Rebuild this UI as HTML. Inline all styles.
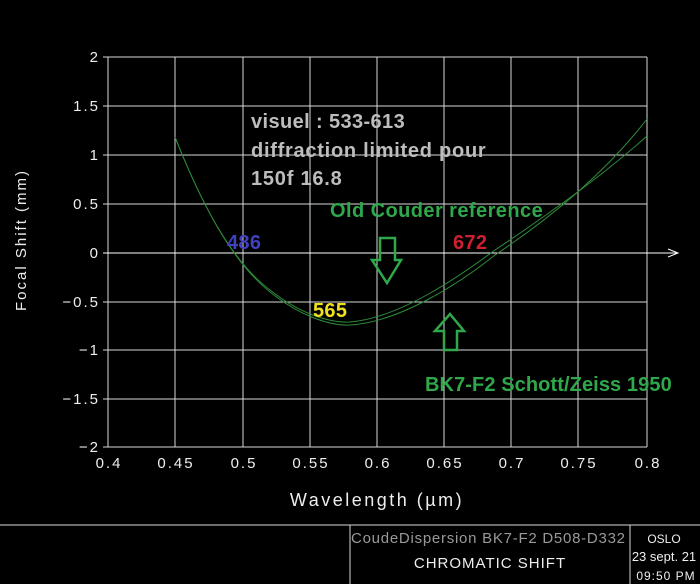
<!DOCTYPE html>
<html><head><meta charset="utf-8"><style>
html,body{margin:0;padding:0;background:#000;}
svg{display:block}
.ax{font-family:"Liberation Sans",sans-serif;font-size:15px;fill:#eee;letter-spacing:2px;}
.b{font-family:"Liberation Sans",sans-serif;font-weight:bold;font-size:20px;letter-spacing:0.3px;}
</style></head><body>
<svg width="700" height="584" viewBox="0 0 700 584" xmlns="http://www.w3.org/2000/svg">
<rect width="700" height="584" fill="#000"/>
<g stroke="#d8d8d8" stroke-width="1">
<line x1="108" y1="57" x2="108" y2="447"/><line x1="175" y1="57" x2="175" y2="447"/><line x1="243" y1="57" x2="243" y2="447"/><line x1="310" y1="57" x2="310" y2="447"/><line x1="377" y1="57" x2="377" y2="447"/><line x1="444" y1="57" x2="444" y2="447"/><line x1="511" y1="57" x2="511" y2="447"/><line x1="578" y1="57" x2="578" y2="447"/><line x1="647" y1="57" x2="647" y2="447"/>
<line x1="103" y1="57" x2="647" y2="57"/><line x1="103" y1="106" x2="647" y2="106"/><line x1="103" y1="155" x2="647" y2="155"/><line x1="103" y1="204" x2="647" y2="204"/><line x1="103" y1="302" x2="647" y2="302"/><line x1="103" y1="350" x2="647" y2="350"/><line x1="103" y1="399" x2="647" y2="399"/><line x1="103" y1="447" x2="647" y2="447"/>
<line x1="103" y1="253" x2="678" y2="253" stroke="#fff"/>
<polyline points="668,249 678,253 668,257" fill="none" stroke="#fff"/>
<line x1="0" y1="525" x2="700" y2="525"/><line x1="350" y1="525" x2="350" y2="584"/><line x1="630" y1="525" x2="630" y2="584"/>
</g>
<g class="ax" text-anchor="end">
<text x="100" y="62">2</text><text x="100" y="111">1.5</text><text x="100" y="160">1</text><text x="100" y="209">0.5</text><text x="100" y="258">0</text><text x="100" y="307">−0.5</text><text x="100" y="355">−1</text><text x="100" y="404">−1.5</text><text x="100" y="452">−2</text>
</g>
<g class="ax" text-anchor="middle">
<text x="109" y="468">0.4</text><text x="176" y="468">0.45</text><text x="244" y="468">0.5</text><text x="311" y="468">0.55</text><text x="378" y="468">0.6</text><text x="445" y="468">0.65</text><text x="512" y="468">0.7</text><text x="579" y="468">0.75</text><text x="648" y="468">0.8</text>
<text x="377" y="506" font-size="18" letter-spacing="2.5">Wavelength (µm)</text>
<text x="490" y="568" font-size="15" letter-spacing="1">CHROMATIC SHIFT</text>
<text x="664" y="543" font-size="12" letter-spacing="0">OSLO</text>
<text x="664" y="561" font-size="13" letter-spacing="0">23 sept. 21</text>
<text x="666" y="580" font-size="12" letter-spacing="1">09:50 PM</text>
</g>
<text class="ax" x="351" y="543" font-size="15" letter-spacing="0" textLength="276" lengthAdjust="spacing" style="fill:#999">CoudeDispersion BK7-F2 D508-D332</text>
<text class="ax" transform="translate(26,240) rotate(-90)" text-anchor="middle" font-size="18" letter-spacing="3">Focal Shift (mm)</text>
<g fill="none" stroke="#2e8b3a" stroke-width="1">
<path d="M175,137 C200,200 230,260 270,292 C300,316 330,326 350,325 C400,322 460,283 495,255 C540,225 600,180 647,119"/>
<path d="M175,137 C200,200 230,260 270,290 C300,314 330,323 350,322 C400,318 460,276 495,250 C540,220 600,178 647,136"/>
</g>
<g fill="none" stroke="#2ea84a" stroke-width="2.5">
<polygon points="380,238 395,238 395,260 401,260 387,283 372,260 380,260"/>
<polygon points="444,350 457,350 457,331 464,331 450,314 435,331 444,331"/>
</g>
<text class="b" x="251" y="128" fill="#bdbdbd" textLength="154">visuel : 533-613</text>
<text class="b" x="251" y="157" fill="#bdbdbd" textLength="235">diffraction limited pour</text>
<text class="b" x="251" y="185" fill="#bdbdbd" textLength="91">150f 16.8</text>
<text class="b" x="330" y="217" fill="#2ea84a" textLength="213">Old Couder reference</text>
<text class="b" x="227" y="249" fill="#4040c0">486</text>
<text class="b" x="453" y="249" fill="#d02030">672</text>
<text class="b" x="313" y="317" fill="#f0e020">565</text>
<text class="b" x="425" y="391" fill="#2ea84a" textLength="247">BK7-F2 Schott/Zeiss 1950</text>
</svg>
</body></html>
